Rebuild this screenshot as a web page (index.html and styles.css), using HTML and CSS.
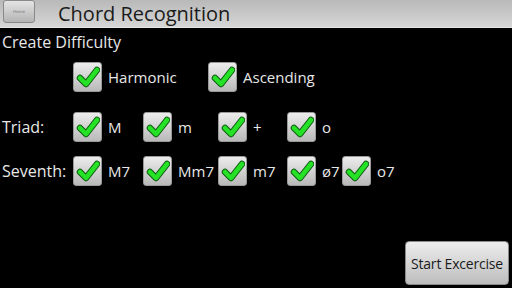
FILE: index.html
```html
<!DOCTYPE html>
<html lang="en">
<head>
    <meta charset="UTF-8">
    <title>Chord Recognition</title>
    <link rel="stylesheet" href="styles.css">
</head>
<body>
    <div class="titlebar">
        <button class="home">Home</button>
        <span class="title">Chord Recognition</span>
    </div>

    <div class="heading">Create Difficulty</div>

    <div class="options">
        <label class="check wide"><span class="box"></span>Harmonic</label>
        <label class="check"><span class="box"></span>Ascending</label>
    </div>

    <div class="grid-row triad">
        <span class="row-label">Triad:</span>
        <label class="check"><span class="box"></span>M</label>
        <label class="check"><span class="box"></span>m</label>
        <label class="check"><span class="box"></span>+</label>
        <label class="check"><span class="box"></span>o</label>
    </div>

    <div class="grid-row seventh">
        <span class="row-label">Seventh:</span>
        <label class="check"><span class="box"></span>M7</label>
        <label class="check"><span class="box"></span>Mm7</label>
        <label class="check"><span class="box"></span>m7</label>
        <label class="check"><span class="box"></span>ø7</label>
        <label class="check"><span class="box"></span>o7</label>
    </div>

    <div class="footer">
        <button class="start">Start Excercise</button>
    </div>

    <script>
        // drop the same check mark into every box
        const tick = '<svg width="24" height="22" viewBox="0 0 24 22">' +
            '<path d="M4 12 L10 18 L21 4" fill="none" stroke="#0d5a10" stroke-width="6.5" stroke-linecap="round" stroke-linejoin="round"/>' +
            '<path d="M4 12 L10 18 L21 4" fill="none" stroke="#26e226" stroke-width="4.5" stroke-linecap="round" stroke-linejoin="round"/>' +
            '</svg>';
        document.querySelectorAll('.box').forEach(box => box.innerHTML = tick);
    </script>
</body>
</html>
```

FILE: styles.css
```css
body {
    margin: 0;
    background-color: #000;
    color: #e8e8e8;
    font-family: "Open Sans", "DejaVu Sans", sans-serif;
    width: 512px;
    height: 288px;
    overflow: hidden;
}

.titlebar {
    height: 27px;
    display: flex;
    align-items: center;
    background: linear-gradient(#b9b9b9, #d6d6d6);
    border-bottom: 1px solid #e6e6e6;
}

.home {
    width: 32px;
    height: 23px;
    margin: 0 0 4px 3px;
    padding: 0;
    border: 1px solid #8a8a8a;
    border-radius: 3px;
    background: linear-gradient(#e4e4e4, #b4b4b4);
    font-family: "DejaVu Sans", sans-serif;
    font-size: 4px;
    color: #777;
}

.title {
    margin-left: 23px;
    font-size: 20px;
    color: #1a1a1a;
    line-height: 27px;
}

.heading {
    font-size: 16px;
    padding-left: 2px;
    margin-top: 3px;
    line-height: 22px;
}

.options {
    display: flex;
    padding-left: 73px;
    margin-top: 9px;
}

.options .wide {
    width: 135px;
}

.check {
    display: flex;
    align-items: center;
    font-size: 15px;
}

.box {
    width: 27px;
    height: 28px;
    margin-right: 6px;
    display: flex;
    align-items: center;
    justify-content: center;
    border: 1px solid #9a9a9a;
    border-radius: 3px;
    background: linear-gradient(#ececec, #b9b9b9);
}

.grid-row {
    display: grid;
    grid-template-columns: 73px 70px 75px 69px 55px auto;
    align-items: center;
}

.triad {
    margin-top: 20px;
}

.seventh {
    margin-top: 14px;
}

.row-label {
    font-size: 16px;
    padding-left: 2px;
}

.footer {
    display: flex;
    justify-content: flex-end;
    margin-top: 55px;
    padding-right: 3px;
}

.start {
    width: 104px;
    height: 44px;
    padding: 0;
    border: 1px solid #8a8a8a;
    border-radius: 4px;
    background: linear-gradient(#ededed, #bdbdbd);
    font-family: "Open Sans", "DejaVu Sans", sans-serif;
    font-size: 14px;
    letter-spacing: -0.2px;
    color: #1a1a1a;
}
```
